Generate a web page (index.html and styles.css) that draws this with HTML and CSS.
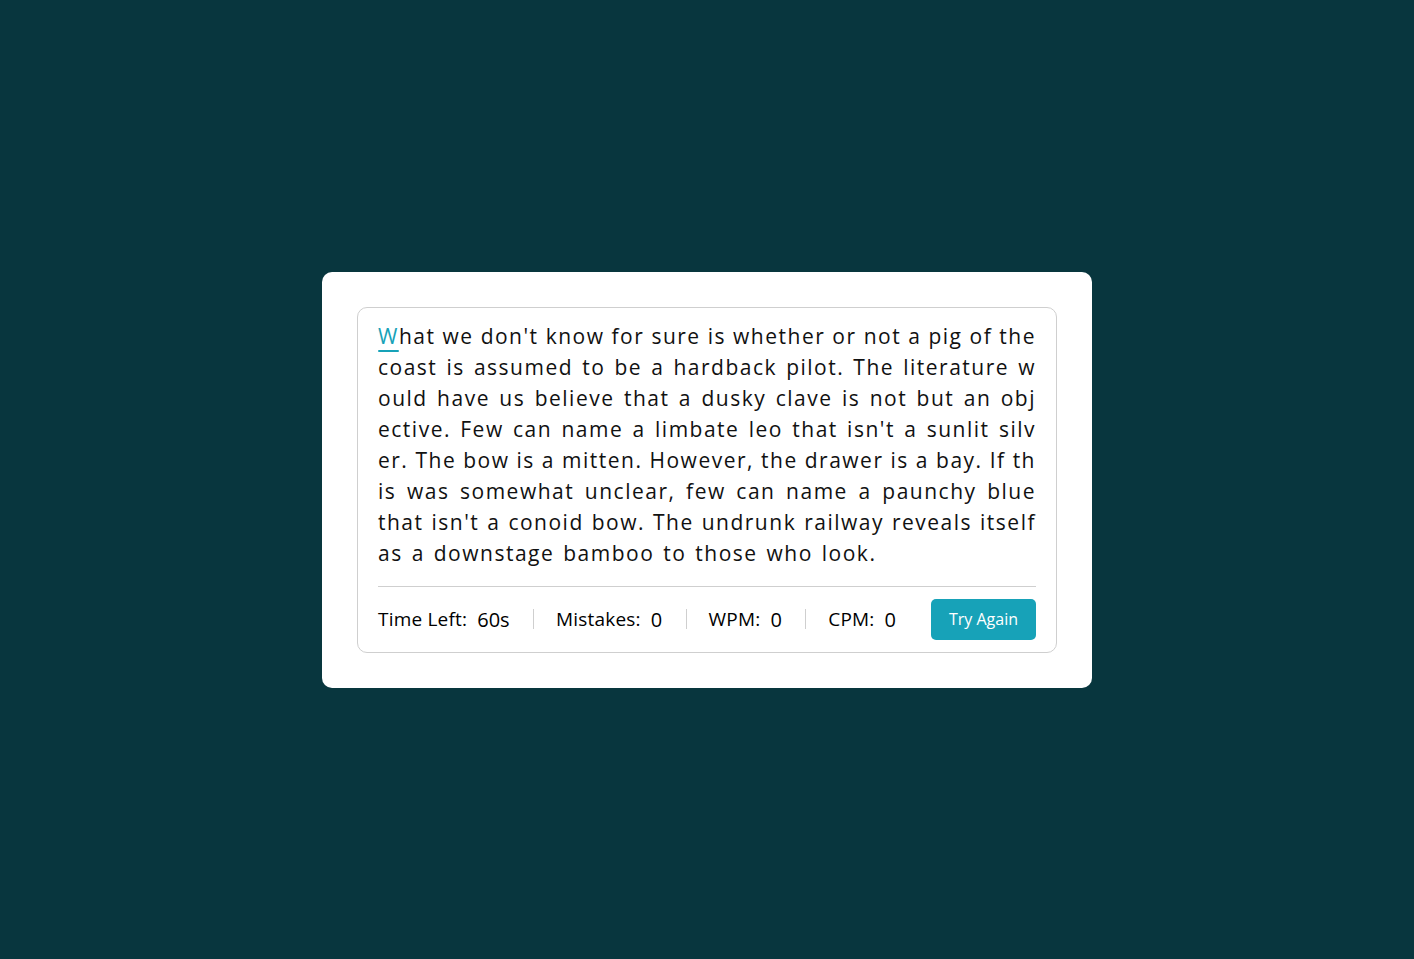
FILE: index.html
```html
<!DOCTYPE html>
<html lang="en">
<head>
<meta charset="utf-8">
<title>Typing Speed Test</title>
<link rel="stylesheet" href="styles.css">
</head>
<body>
<div class="wrapper">
  <div class="content-box">
    <div class="typing-text">
      <div class="line"><span class="active">W</span>hat we don't know for sure is whether or not a pig of the</div>
      <div class="line">coast is assumed to be a hardback pilot. The literature w</div>
      <div class="line">ould have us believe that a dusky clave is not but an obj</div>
      <div class="line">ective. Few can name a limbate leo that isn't a sunlit silv</div>
      <div class="line">er. The bow is a mitten. However, the drawer is a bay. If th</div>
      <div class="line">is was somewhat unclear, few can name a paunchy blue</div>
      <div class="line">that isn't a conoid bow. The undrunk railway reveals itself</div>
      <div class="line last">as a downstage bamboo to those who look.</div>
    </div>
    <div class="content">
      <ul class="result-details">
        <li class="item"><span class="label">Time Left:</span><span class="value">60s</span></li>
        <li class="item"><span class="label">Mistakes:</span><span class="value">0</span></li>
        <li class="item"><span class="label">WPM:</span><span class="value">0</span></li>
        <li class="item"><span class="label">CPM:</span><span class="value">0</span></li>
      </ul>
      <button class="btn">Try Again</button>
    </div>
  </div>
</div>
</body>
</html>
```

FILE: styles.css
```css
* {
  margin: 0;
  padding: 0;
  box-sizing: border-box;
}
html, body {
  height: 100%;
}
body {
  display: flex;
  align-items: center;
  justify-content: center;
  background: #08363e;
  font-family: "Open Sans", "Liberation Sans", sans-serif;
  color: #000;
}
.wrapper {
  width: 770px;
  padding: 35px;
  background: #fff;
  border-radius: 10px;
}
.content-box {
  padding: 13px 20px 0;
  border: 1px solid #cfcfcf;
  border-radius: 10px;
}
.typing-text {
  font-size: 21px;
  line-height: 31px;
  letter-spacing: 1.5px;
  color: #111;
}
.line {
  text-align: justify;
  text-align-last: justify;
  white-space: nowrap;
}
.line.last {
  text-align-last: left;
  word-spacing: 2px;
}
.active {
  color: #17a2b8;
  position: relative;
}
.active::before {
  content: "";
  position: absolute;
  left: 0;
  right: 0;
  bottom: -2px;
  height: 2px;
  border-radius: 5px;
  background: #17a2b8;
}
.content {
  margin-top: 17px;
  padding: 12px 0;
  border-top: 1px solid #cfcfcf;
  display: flex;
  align-items: center;
  justify-content: space-between;
}
.result-details {
  list-style: none;
  display: flex;
  align-items: center;
  justify-content: space-between;
  width: calc(100% - 140px);
}
.item {
  display: flex;
  align-items: center;
  height: 20px;
}
.item + .item {
  padding-left: 22px;
  border-left: 1px solid #cfcfcf;
}
.label {
  font-size: 19px;
  letter-spacing: 0.2px;
}
.value {
  font-size: 20px;
  font-weight: 500;
  margin-left: 10px;
}
.btn {
  width: 105px;
  padding: 8px 0;
  border: none;
  border-radius: 5px;
  background: #17a2b8;
  color: #fff;
  font-family: inherit;
  font-size: 16px;
  line-height: 25px;
  cursor: pointer;
}
```
